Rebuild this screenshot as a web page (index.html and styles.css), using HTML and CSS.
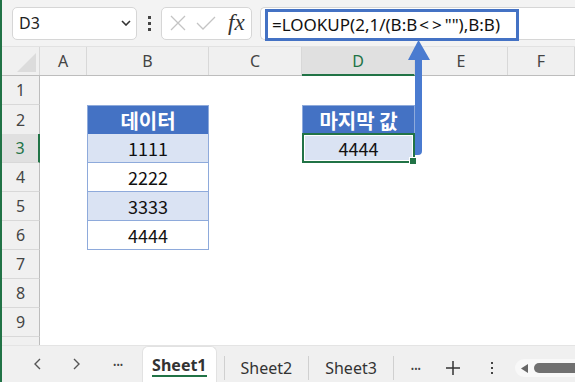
FILE: index.html
```html
<!DOCTYPE html>
<html>
<head>
    <meta charset="UTF-8">
    <title>LOOKUP last value</title>
    <link rel="stylesheet" href="styles.css">
</head>
<body>
<div class="app">
    <!-- Formula toolbar -->
    <div class="toolbar">
        <div class="name-box">
            <span>D3</span>
            <svg class="chevron" width="10" height="6" viewBox="0 0 10 6"><path d="M1 1l4 4 4-4" fill="none" stroke="#333" stroke-width="1.6"/></svg>
        </div>
        <div class="vdots"><i></i><i></i><i></i></div>
        <div class="fx-box">
            <svg width="16" height="16" viewBox="0 0 16 16"><path d="M1 1l14 14M15 1L1 15" stroke="#c4c4c4" stroke-width="1.3"/></svg>
            <svg width="20" height="14" viewBox="0 0 20 14"><path d="M1 7l6 6L19 1" fill="none" stroke="#c4c4c4" stroke-width="1.3"/></svg>
            <span class="fx">fx</span>
        </div>
        <div class="formula-bar">
            <div class="formula-text">=LOOKUP(2,1/(B:B<span class="op">&lt;&gt;</span>""),B:B)</div>
        </div>
    </div>

    <!-- Sheet grid -->
    <div class="sheet">
        <div class="row head-row">
            <div class="corner"><span class="corner-tri"></span></div>
            <div class="col-head">A</div>
            <div class="col-head">B</div>
            <div class="col-head">C</div>
            <div class="col-head selected">D</div>
            <div class="col-head">E</div>
            <div class="col-head">F</div>
        </div>
        <div class="row">
            <div class="row-head">1</div>
            <div></div><div></div><div></div><div></div><div></div><div></div>
        </div>
        <div class="row">
            <div class="row-head">2</div>
            <div></div>
            <div class="cell th top">데이터</div>
            <div></div>
            <div class="cell th top">마지막 값</div>
            <div></div><div></div>
        </div>
        <div class="row">
            <div class="row-head selected">3</div>
            <div></div>
            <div class="cell band">1111</div>
            <div></div>
            <div class="cell result active">4444<span class="handle"></span></div>
            <div></div><div></div>
        </div>
        <div class="row">
            <div class="row-head">4</div>
            <div></div>
            <div class="cell">2222</div>
            <div></div><div></div><div></div><div></div>
        </div>
        <div class="row">
            <div class="row-head">5</div>
            <div></div>
            <div class="cell band">3333</div>
            <div></div><div></div><div></div><div></div>
        </div>
        <div class="row">
            <div class="row-head">6</div>
            <div></div>
            <div class="cell">4444</div>
            <div></div><div></div><div></div><div></div>
        </div>
        <div class="row">
            <div class="row-head">7</div>
            <div></div><div></div><div></div><div></div><div></div><div></div>
        </div>
        <div class="row">
            <div class="row-head">8</div>
            <div></div><div></div><div></div><div></div><div></div><div></div>
        </div>
        <div class="row">
            <div class="row-head">9</div>
            <div></div><div></div><div></div><div></div><div></div><div></div>
        </div>
        <div class="row">
            <div class="row-head"></div>
            <div></div><div></div><div></div><div></div><div></div><div></div>
        </div>
    </div>

    <!-- Sheet tabs -->
    <div class="tabbar">
        <div class="tab-nav">
            <svg width="8" height="12" viewBox="0 0 8 12"><path d="M7 1L2 6l5 5" fill="none" stroke="#555" stroke-width="1.4"/></svg>
            <svg width="8" height="12" viewBox="0 0 8 12"><path d="M1 1l5 5-5 5" fill="none" stroke="#555" stroke-width="1.4"/></svg>
            <span class="dots">•••</span>
        </div>
        <div class="tab active">Sheet1</div>
        <div class="tab first">Sheet2</div>
        <div class="tab">Sheet3</div>
        <div class="tab-tools">
            <span class="dots">•••</span>
            <svg width="16" height="16" viewBox="0 0 16 16"><path d="M8 1v14M1 8h14" stroke="#333" stroke-width="1.5"/></svg>
            <div class="vdots small"><i></i><i></i><i></i></div>
            <div class="hscroll">
                <svg width="7" height="9" viewBox="0 0 7 9"><path d="M7 0v9L0 4.5z" fill="#666"/></svg>
                <span class="thumb"></span>
            </div>
        </div>
    </div>
</div>

<!-- annotation arrow -->
<svg class="arrow" width="575" height="382" viewBox="0 0 575 382">
    <path d="M418.5 40L430 60h-8v91a4 4 0 0 1-4 4h-3V60h-7z" fill="#4a7bd0"/>
</svg>
</body>
</html>
```

FILE: styles.css
```css
* {
    box-sizing: border-box;
}

body {
    margin: 0;
    width: 575px;
    height: 382px;
    overflow: hidden;
    background: #fff;
    font-family: "Noto Sans", "Open Sans", sans-serif;
    color: #333;
    position: relative;
}

.app {
    height: 382px;
    border-left: 2px solid #217346;
    display: flex;
    flex-direction: column;
}

/* Toolbar */
.toolbar {
    height: 47px;
    background: #f3f3f3;
    border-bottom: 1px solid #e2e2e2;
    display: flex;
    align-items: center;
    padding-left: 10px;
}

.name-box {
    width: 125px;
    height: 33px;
    background: #fff;
    border: 1px solid #d6d6d6;
    border-radius: 5px;
    display: flex;
    align-items: center;
    justify-content: space-between;
    padding: 0 5px 0 6px;
    font-size: 16px;
    color: #222;
}

.vdots {
    display: flex;
    flex-direction: column;
    gap: 3px;
    margin: 0 10px 0 11px;
}

.vdots i {
    width: 3px;
    height: 3px;
    background: #444;
}

.fx-box {
    width: 91px;
    height: 33px;
    background: #fff;
    border: 1px solid #d6d6d6;
    border-radius: 5px;
    display: flex;
    align-items: center;
    gap: 10px;
    padding-left: 8px;
}

.fx {
    font-family: "Liberation Serif", serif;
    font-style: italic;
    font-size: 23px;
    color: #333;
    margin-left: 2px;
}

.formula-bar {
    flex: 1;
    height: 33px;
    margin-left: 8px;
    background: #fff;
    border: 1px solid #d6d6d6;
    border-right: none;
    border-radius: 5px 0 0 5px;
    padding: 1px 0 0 4px;
}

.formula-text {
    width: 254px;
    height: 32px;
    border: 3px solid #4472c4;
    padding-left: 4px;
    font-size: 17px;
    line-height: 26px;
    color: #111;
    white-space: nowrap;
}

.formula-text .op {
    letter-spacing: 3px;
    margin-left: 2px;
}

/* Sheet */
.sheet {
    height: 298px;
    overflow: hidden;
}

.row {
    display: grid;
    grid-template-columns: 38px 47px 122px 93px 113px 93px 1fr;
    height: 29px;
}

.head-row {
    background: #f0f0f0;
    border-bottom: 1px solid #bdbdbd;
}

.corner {
    border-right: 1px solid #d8d8d8;
    position: relative;
}

.corner-tri {
    position: absolute;
    right: 3px;
    bottom: 3px;
    width: 0;
    height: 0;
    border-left: 19px solid transparent;
    border-bottom: 19px solid #dcdcdc;
}

.col-head {
    border-right: 1px solid #d8d8d8;
    display: flex;
    align-items: center;
    justify-content: center;
    font-size: 16px;
    color: #444;
}

.col-head.selected {
    background: #e0e0e0;
    color: #217346;
    border-bottom: 2px solid #217346;
    margin-bottom: -1px;
}

.row-head {
    background: #f0f0f0;
    border-right: 1px solid #bdbdbd;
    border-bottom: 1px solid #d8d8d8;
    display: flex;
    align-items: center;
    justify-content: center;
    font-size: 16px;
    color: #444;
}

.row-head.selected {
    background: #e0e0e0;
    color: #217346;
    border-right: 2px solid #217346;
}

.cell {
    border: 1px solid #8eaadb;
    border-top: none;
    display: flex;
    align-items: center;
    justify-content: center;
    font-family: "Noto Sans CJK KR", "Noto Sans", sans-serif;
    font-size: 18px;
    color: #111;
    position: relative;
}

.cell.top {
    border-top: 1px solid #8eaadb;
}

.cell.th {
    background: #4472c4;
    color: #fff;
    font-weight: bold;
    font-size: 20px;
}

.cell.band {
    background: #dae3f3;
}

.cell.result {
    background: #dae3f3;
}

.cell.active::after {
    content: "";
    position: absolute;
    inset: -1px;
    border: 2px solid #217346;
    box-shadow: inset 0 0 0 1px #fff;
}

.handle {
    position: absolute;
    right: -2px;
    bottom: -2px;
    width: 6px;
    height: 6px;
    background: #217346;
    outline: 1px solid #fff;
    z-index: 1;
}

/* Tabs */
.tabbar {
    flex: 1;
    background: #f0f0f0;
    border-top: 1px solid #e4e4e4;
    display: flex;
    align-items: stretch;
    font-size: 16px;
    color: #333;
}

.tab-nav {
    display: flex;
    align-items: center;
    gap: 32px;
    padding-left: 31px;
    width: 141px;
}

.dots {
    font-size: 9px;
    color: #444;
}

.tab {
    display: flex;
    align-items: center;
    padding: 0 16px 0 16px;
    border-left: 1px solid #d0d0d0;
    margin: 8px 0 0;
    height: 24px;
    align-self: center;
}

.tab.first {
    margin-left: 7px;
}

.tab.active {
    background: #fff;
    border: 1px solid #e2e2e2;
    border-bottom: none;
    border-radius: 6px 6px 0 0;
    font-weight: bold;
    padding: 0 9px;
    height: auto;
    margin: 0;
    align-self: stretch;
    position: relative;
}

.tab.active::after {
    content: "";
    position: absolute;
    left: 9px;
    right: 9px;
    bottom: 5px;
    height: 2px;
    background: #217346;
}

.tab-tools {
    display: flex;
    align-items: center;
    gap: 24px;
    padding-left: 17px;
    border-left: 1px solid #d0d0d0;
    margin: 8px 0 0;
    height: 24px;
    align-self: center;
}

.vdots.small {
    margin: 0 -2px 0 6px;
}

.vdots.small i {
    width: 2px;
    height: 2px;
}

.hscroll {
    flex: 1;
    width: 60px;
    height: 18px;
    background: #f8f8f8;
    border-radius: 9px 0 0 9px;
    display: flex;
    align-items: center;
    gap: 6px;
    padding-left: 6px;
}

.thumb {
    flex: 1;
    height: 10px;
    background: #707070;
    border-radius: 5px 0 0 5px;
}

.arrow {
    position: absolute;
    left: 0;
    top: 0;
    pointer-events: none;
}
```
